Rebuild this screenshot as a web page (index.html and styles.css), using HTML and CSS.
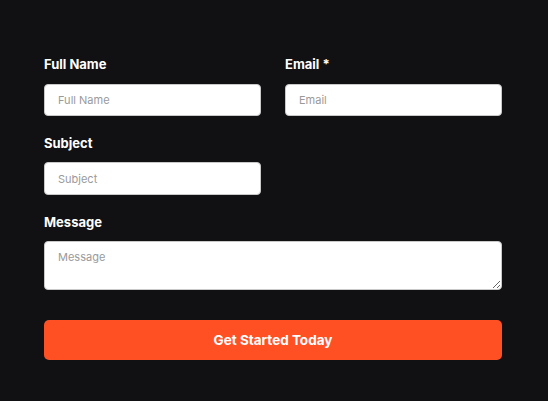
FILE: index.html
```html
<!DOCTYPE html>
<html>
<head>
    <title>Contact Form</title>
    <link rel="stylesheet" href="styles.css">
</head>
<body>
    <form class="contact-form" onsubmit="return false">
        <div class="row">
            <div class="field">
                <label for="fullName">Full Name</label>
                <input type="text" id="fullName" placeholder="Full Name">
            </div>
            <div class="field">
                <label for="email">Email *</label>
                <input type="email" id="email" placeholder="Email" required>
            </div>
        </div>

        <div class="row">
            <div class="field field-tight">
                <label for="subject">Subject</label>
                <input type="text" id="subject" placeholder="Subject">
            </div>
        </div>

        <div class="field field-tight">
            <label for="message">Message</label>
            <textarea id="message" placeholder="Message"></textarea>
        </div>

        <button type="submit">Get Started Today</button>
    </form>
</body>
</html>
```

FILE: styles.css
```css
body {
    font-family: Inter, "Liberation Sans", Arial, sans-serif;
    background: #111013;
    margin: 0;
    padding: 0;
}

.contact-form {
    width: 458px;
    padding: 56px 0 0 44px;
    display: flex;
    flex-direction: column;
    gap: 19px;
}

.row {
    display: grid;
    grid-template-columns: 1fr 1fr;
    gap: 24px;
}

.field {
    display: flex;
    flex-direction: column;
}

label {
    font-size: 13px;
    line-height: 16px;
    font-weight: 700;
    color: #fff;
    margin-bottom: 12px;
}

.field-tight label {
    margin-bottom: 11px;
}

input[type="text"],
input[type="email"],
textarea {
    width: 100%;
    height: 32px;
    padding: 0 13px;
    border: 1px solid #c9c9c9;
    border-radius: 4px;
    box-sizing: border-box;
    background: #fff;
    font-family: inherit;
    font-size: 11px;
    color: #333;
    outline: none;
}

.field-tight input {
    height: 33px;
}

textarea {
    height: 49px;
    padding: 8px 13px;
    resize: vertical;
    display: block;
}

::placeholder {
    color: #9a9a9a;
}

button {
    width: 100%;
    height: 40px;
    margin-top: 11px;
    background-color: #ff5024;
    color: #fff;
    border: none;
    border-radius: 5px;
    font-family: inherit;
    font-size: 13.5px;
    font-weight: 700;
    cursor: pointer;
}

button:hover {
    background-color: #f04616;
}
```
